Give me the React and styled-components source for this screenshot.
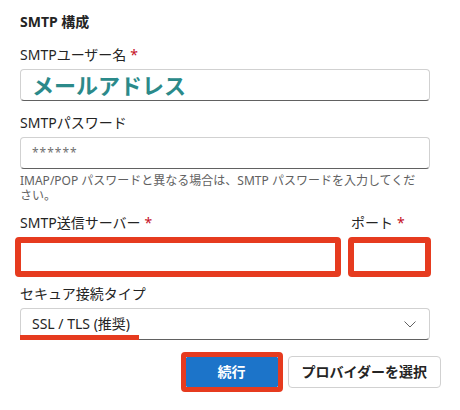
import React from 'react'
import styled, { createGlobalStyle } from 'styled-components'

const GlobalStyle = createGlobalStyle`
  body {
    margin: 0;
    background: #ffffff;
    font-family: "Noto Sans", "Noto Sans CJK JP", sans-serif;
    color: #242424;
  }
`

const RED = '#e63b1f'

const Form = styled.div`
  width: 410px;
  padding: 12px 0 0 20px;
  display: flex;
  flex-direction: column;
`

const Title = styled.div`
  font-size: 14px;
  font-weight: 700;
  line-height: 20px;
`

const Label = styled.div`
  font-size: 14px;
  line-height: 20px;
  margin-top: ${p => p.$top || 0}px;
  margin-bottom: 4px;
  margin-left: ${p => p.$indent || 0}px;
  white-space: nowrap;
`

const Star = styled.span`
  color: #c50f1f;
  margin-left: 4px;
`

const Input = styled.div`
  box-sizing: border-box;
  width: 410px;
  height: 32px;
  border: 1px solid #d1d1d1;
  border-bottom-color: #616161;
  border-radius: 4px;
  background: #fff;
  display: flex;
  align-items: center;
  padding-left: 11px;
  position: relative;
`

/* red annotation frame that replaces the input border */
const Highlight = styled.div`
  box-sizing: border-box;
  width: ${p => p.$width}px;
  height: 40px;
  border: 6px solid ${RED};
  border-radius: 4px;
  background: #fff;
`

const BigValue = styled.span`
  font-size: 22px;
  font-weight: 700;
  color: #2b8a8a;
  line-height: 28px;
`

const Mask = styled.span`
  font-size: 12px;
  color: #707070;
  letter-spacing: 1px;
  line-height: 16px;
`

const Help = styled.div`
  font-size: 12px;
  line-height: 15px;
  color: #616161;
  margin-top: 4px;
  padding-right: 4px;
`

const Row = styled.div`
  display: flex;
  gap: 7px;
  margin-top: 10px;
  margin-left: -5px;
`

const Column = styled.div`
  display: flex;
  flex-direction: column;
`

const SelectText = styled.span`
  font-size: 14px;
  font-weight: 400;
  line-height: 20px;
  flex: 1;
`

const Chevron = styled.svg`
  width: 12px;
  height: 7px;
  margin-right: 13px;
`

const Underline = styled.div`
  position: absolute;
  left: -1px;
  top: 26px;
  width: 119px;
  height: 5px;
  background: ${RED};
`

const ButtonRow = styled.div`
  width: 421px;
  display: flex;
  justify-content: flex-end;
  align-items: center;
  gap: 5px;
  margin-top: 12px;
`

const ButtonFrame = styled.div`
  border: 5px solid ${RED};
  border-radius: 4px;
  display: flex;
`

const Button = styled.button`
  box-sizing: border-box;
  height: ${p => (p.$primary ? 30 : 32)}px;
  padding: 0 ${p => (p.$primary ? 0 : 13)}px;
  width: ${p => (p.$primary ? '92px' : 'auto')};
  border-radius: ${p => (p.$primary ? 1 : 4)}px;
  border: 1px solid ${p => (p.$primary ? '#1c74c9' : '#d1d1d1')};
  background: ${p => (p.$primary ? '#1c74c9' : '#ffffff')};
  color: ${p => (p.$primary ? '#ffffff' : '#242424')};
  font-family: "Noto Sans", "Noto Sans CJK JP", sans-serif;
  font-size: 14px;
  font-weight: 700;
  line-height: 20px;
`

export default function App() {
  return (
    <>
      <GlobalStyle />
      <Form>
        <Title>SMTP 構成</Title>

        <Label $top={13}>SMTPユーザー名<Star>*</Star></Label>
        <Input>
          <BigValue>メールアドレス</BigValue>
        </Input>

        <Label $top={12}>SMTPパスワード</Label>
        <Input>
          <Mask>******</Mask>
        </Input>
        <Help>IMAP/POP パスワードと異なる場合は、SMTP パスワードを入力してください。</Help>

        <Row>
          <Column>
            <Label $indent={5}>SMTP送信サーバー<Star>*</Star></Label>
            <Highlight $width={326} />
          </Column>
          <Column>
            <Label $indent={3}>ポート<Star>*</Star></Label>
            <Highlight $width={83} />
          </Column>
        </Row>

        <Label $top={7}>セキュア接続タイプ</Label>
        <Input>
          <SelectText>SSL / TLS (推奨)</SelectText>
          <Chevron viewBox="0 0 12 7">
            <polyline points="0.5,0.5 6,6 11.5,0.5" fill="none" stroke="#616161" strokeWidth="1" />
          </Chevron>
          <Underline />
        </Input>

        <ButtonRow>
          <ButtonFrame>
            <Button $primary>続行</Button>
          </ButtonFrame>
          <Button>プロバイダーを選択</Button>
        </ButtonRow>
      </Form>
    </>
  )
}
